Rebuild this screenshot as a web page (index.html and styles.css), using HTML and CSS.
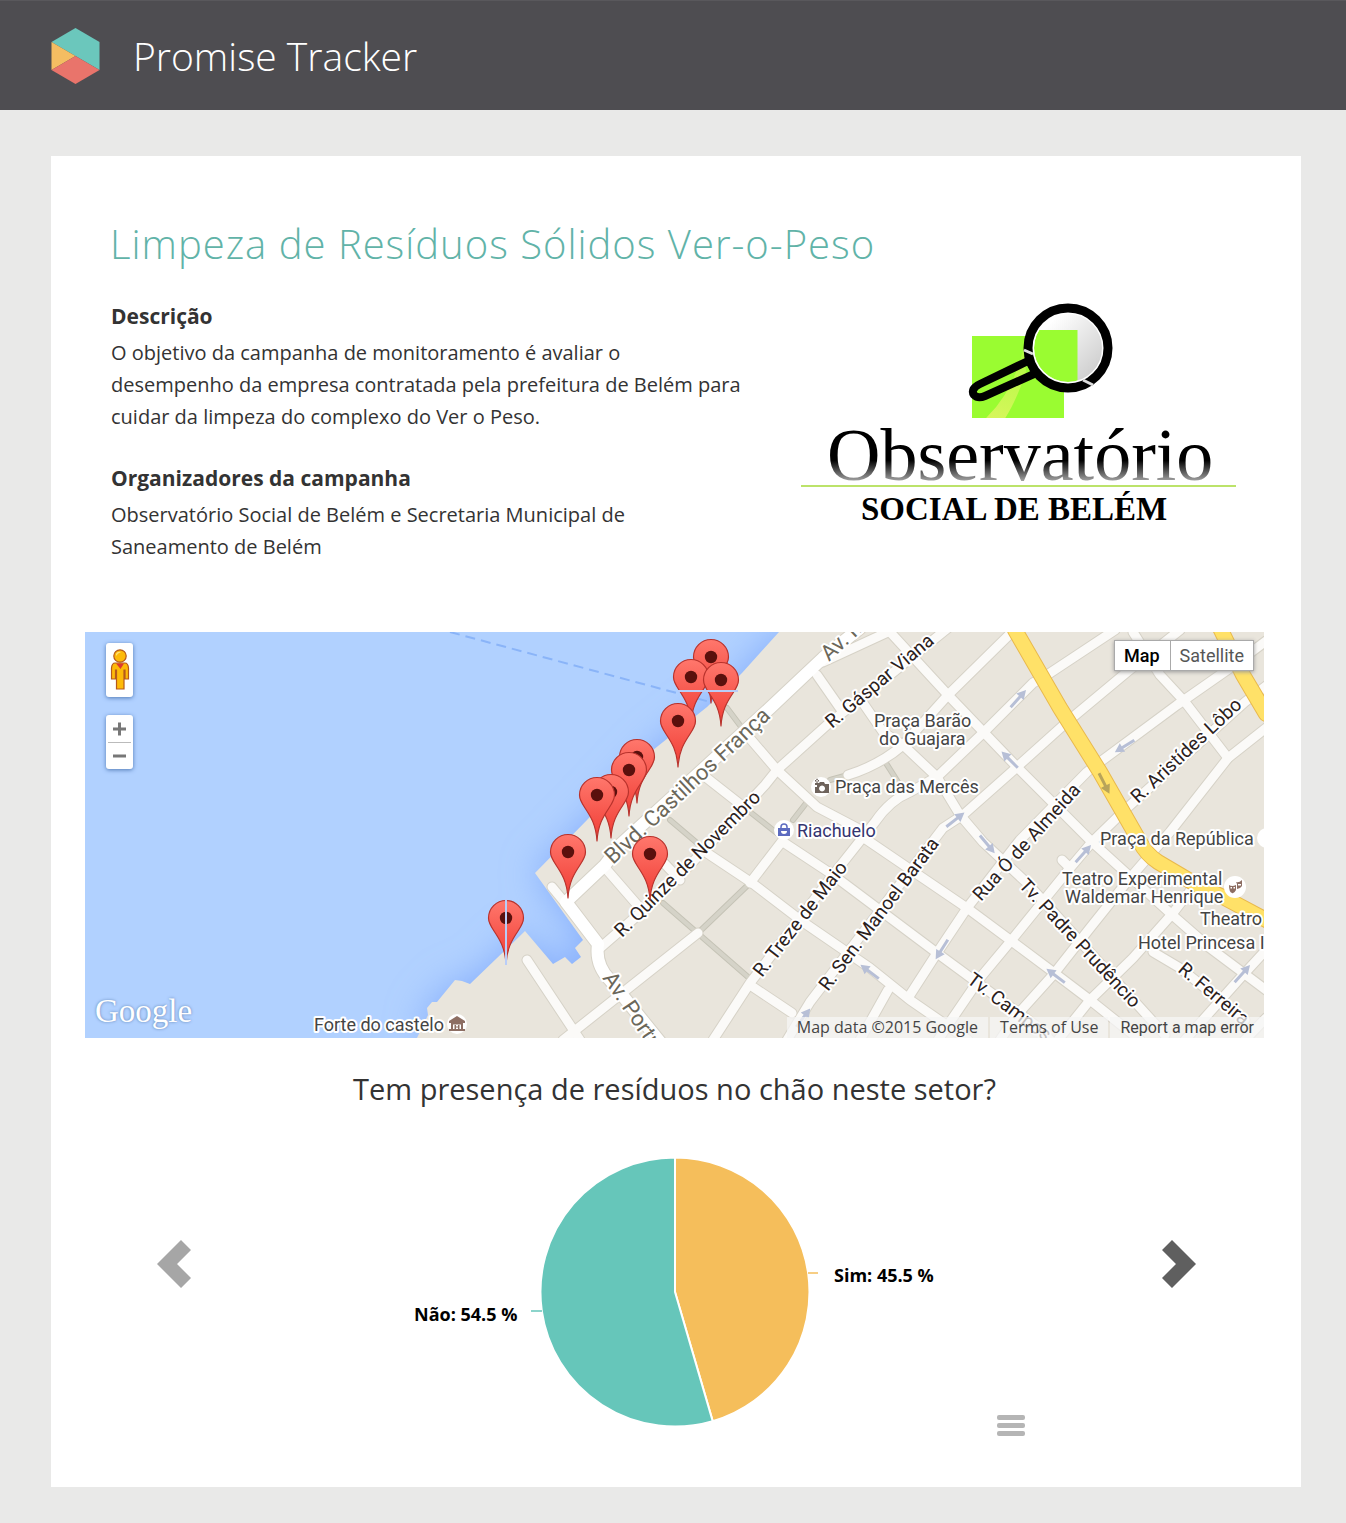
FILE: index.html
```html
<!DOCTYPE html>
<html lang="pt-BR">
<head>
<meta charset="utf-8">
<title>Promise Tracker</title>
<link rel="stylesheet" href="styles.css">
</head>
<body>
<header class="site-header">
  <a class="brand" href="#">
    <svg class="brand-mark" viewBox="0 0 48 56" aria-hidden="true">
      <path fill="#6bc7bc" d="M0 14 24 0 48 14V42z"/>
      <path fill="#f4bd62" d="M0 14 24 28 0 42z"/>
      <path fill="#e9746b" d="M24 28 48 42 24 56 0 42z"/>
    </svg>
    <span>Promise Tracker</span>
  </a>
</header>
<main class="card">
  <h1 class="campaign-title">Limpeza de Resíduos Sólidos Ver-o-Peso</h1>
  <section class="intro">
    <div class="intro-text">
      <h2>Descrição</h2>
      <p>O objetivo da campanha de monitoramento é avaliar o desempenho da empresa contratada pela prefeitura de Belém para cuidar da limpeza do complexo do Ver o Peso.</p>
      <h2>Organizadores da campanha</h2>
      <p>Observatório Social de Belém e Secretaria Municipal de Saneamento de Belém</p>
    </div>
    <svg class="org-logo" viewBox="800 300 436 230" role="img" aria-label="Observatório Social de Belém">
      <defs>
        <linearGradient id="fade" gradientUnits="userSpaceOnUse" x1="0" y1="425" x2="0" y2="482"><stop offset="0.62" stop-color="#000"/><stop offset="1" stop-color="#aaa"/></linearGradient>
        <linearGradient id="glass" x1="0" y1="0" x2="1" y2="1"><stop offset="0.2" stop-color="#fff"/><stop offset="1" stop-color="#c4c4c4"/></linearGradient>
        <linearGradient id="shine" gradientUnits="userSpaceOnUse" x1="1000" y1="418" x2="1024" y2="350"><stop offset="0" stop-color="#e4f565"/><stop offset="1" stop-color="#b4fa45"/></linearGradient>
        <clipPath id="lens"><circle cx="1068" cy="348" r="34"/></clipPath>
        <clipPath id="tile"><path d="M972 336h92v82h-92z"/></clipPath>
      </defs>
      <path fill="#9afc31" d="M972 336h92v82h-92z"/>
      <path clip-path="url(#tile)" fill="url(#shine)" d="M984 420Q1014 392 1024 346L1026 372Q1016 402 1004 420z" opacity=".8"/>
      <circle cx="1068" cy="348" r="36" fill="url(#glass)"/>
      <path clip-path="url(#lens)" fill="#9afc31" d="M1030 330h47.500v60h-47.500z"/>
      <circle cx="1068" cy="348" r="35" fill="none" stroke="#fff" stroke-width="2"/>
      <circle cx="1068" cy="348" r="40" fill="none" stroke="#000" stroke-width="9"/>
      <path fill="none" stroke="#000" stroke-width="8" d="M1028 361 980 384Q970 389 974 395 978 399 985 396L1034 374"/>
      <path fill="none" stroke="#000" stroke-width="5" d="M1026 358 1036 375"/>
      <path stroke="#ddd" stroke-width="3" d="M1024 350 1033 354M1083 380 1093 385"/>
      <text class="logo-name" x="827" y="480" fill="url(#fade)">Observatório</text>
      <path stroke="#bce36a" stroke-width="2" d="M801 486H1236"/>
      <text class="logo-sub" x="861" y="520">SOCIAL DE BELÉM</text>
    </svg>
  </section>

  <section class="map" aria-label="Mapa">
    <svg class="map-canvas" viewBox="85 632 1179 406" preserveAspectRatio="xMidYMid slice">
      <defs>
        <linearGradient id="pinfill" x1="0" y1="0" x2="0" y2="1"><stop offset="0" stop-color="#ff776c"/><stop offset="1" stop-color="#f03c34"/></linearGradient>
        <g id="pin">
          <path fill="url(#pinfill)" stroke="#b8322c" stroke-width="1.200" d="M0 46C-1 30-6 22-12 13-16 7-17.500 4-17.500 0A17.500 17.500 0 0 1 17.500 0C17.500 4 16 7 12 13 6 22 1 30 0 46z"/>
          <circle r="6.200" fill="#5a100d"/>
        </g>
        <g id="arrow"><path d="M-11-1.500H3V-5L12 0 3 5V1.500H-11z"/></g>
        <filter id="soft" x="-20%" y="-20%" width="140%" height="140%"><feGaussianBlur stdDeviation="18"/></filter>
        <path id="land" d="M779 632 742 673 707 707 653 750 587 820 535 873 583 940 575 948 581 957 572 964 565 957 553 964 525 931 470 984 462 981 455 980 437 1002 432 1002 427 1008 428 1015 417 1038H1264V632z"/>
        <clipPath id="frame"><path d="M85 632h1179v406H85z"/></clipPath>
        <g id="streets">
          <path d="M552 887 566 904"/>
          <path d="M823 662 888 632M600 948 646 908 690 865 765 785 777 770 827 725 880 683 948 628"/>
          <path d="M563 1040 698 933M750 883 783 840M848 775Q880 765 903 745L948 695 1012 632"/>
          <path d="M713 1040 750 983 833 875 875 822Q890 800 910 792L937 777 983 733 1033 683 1047 675 1115 630"/>
          <path d="M787 1040 810 1002 943 828 963 815 1017 767 1067 722 1127 672 1180 630"/>
          <path d="M908 998 937 953 967 908 1020 840 1087 772 1100 762 1177 705 1230 668 1266 641M888 990 860 1040"/>
          <path d="M1266 686 1245 702 1127 808 1092 842 1070 868 1010 942 980 978 950 1022 938 1040M1062 860 1070 868"/>
          <path d="M1266 728 1228 758 1170 832 1130 878 1090 928 1053 975 1017 1015 1000 1040"/>
          <path d="M1200 878 1173 913 1133 958 1090 1000 1058 1040M1266 950 1243 975 1185 1040M1266 1018 1240 1045"/>
          <path d="M527 960 580 1040M607 870 640 908M663 862 680 880M753 987 792 1013M703 775 745 808"/>
          <path d="M707 853 752 883 803 922 870 968 910 1000 968 1040M783 842 833 875 937 953 1035 1025 1050 1040"/>
          <path d="M747 735 777 770 817 807 857 828 867 840 967 908 1053 972 1090 1000 1140 1040"/>
          <path d="M817 675 840 708M863 703 883 732 903 745 937 777 960 815 983 842 1027 883 1165 1035"/>
          <path d="M890 632 948 695 1017 767 1092 842 1170 913 1210 948 1266 990"/>
          <path d="M1133 632 1160 675 1185 702 1228 758M1153 952 1180 968 1245 1020"/>
        </g>
        <path id="avenue" d="M568 900 605 865 620 845 770 708 823 658 860 628M566 902 598 944Q595 965 610 980L660 1042"/>
        <path id="highway" d="M1015 630 1060 708 1100 772 1140 842Q1146 854 1158 862L1197 885 1223 897 1268 921M1220 628 1243 675 1266 714"/>
      </defs>
      <g clip-path="url(#frame)">
        <path fill="#b1d1ff" d="M85 632h1179v406H85z"/>
        <use href="#land" class="shore" filter="url(#soft)"/>
        <path class="ferry" d="M450 632 710 702"/>
        <use href="#land" fill="#e9e5dc"/>
        <path class="lane-edge" d="M698 933 748 885M663 903 748 977M670 820 703 848M745 808 783 838M727 708 742 728M793 820 807 802M830 780 848 775M884 760 898 782"/>
        <path class="lane" d="M698 933 748 885M663 903 748 977M670 820 703 848M745 808 783 838M727 708 742 728M793 820 807 802M830 780 848 775M884 760 898 782"/>
        <use href="#streets" class="street-edge"/><use href="#avenue" class="avenue-edge"/>
        <use href="#streets" class="street"/><use href="#avenue" class="avenue"/>
        <use href="#highway" class="highway-edge"/><use href="#highway" class="highway"/>
        <g fill="#b7bfd6">
          <use href="#arrow" transform="translate(1018 699) rotate(-48)"/>
          <use href="#arrow" transform="translate(1010 760) rotate(-135)"/>
          <use href="#arrow" transform="translate(1125 746) rotate(148)"/>
          <use href="#arrow" transform="translate(955 820) rotate(-38)"/>
          <use href="#arrow" transform="translate(987 844) rotate(50)"/>
          <use href="#arrow" transform="translate(942 949) rotate(122)"/>
          <use href="#arrow" transform="translate(870 972) rotate(-143)"/>
          <use href="#arrow" transform="translate(803 1018) rotate(-53)"/>
          <use href="#arrow" transform="translate(1083 854) rotate(-48)"/>
          <use href="#arrow" transform="translate(1056 976) rotate(-143)"/>
          <use href="#arrow" transform="translate(1242 974) rotate(-48)"/>
        </g>
        <use href="#arrow" fill="#b8a45a" transform="translate(1104 783) rotate(63)"/>
        <g class="label road-main">
          <text transform="translate(613 865) rotate(-43)">Blvd. Castilhos França</text>
          <text transform="translate(829 662) rotate(-43)">Av. Marechal</text>
          <text transform="translate(602 978) rotate(56)">Av. Portugal</text>
        </g>
        <g class="label road">
          <text transform="translate(622 938) rotate(-45)">R. Quinze de Novembro</text>
          <text transform="translate(832 729) rotate(-40)">R. Gáspar Viana</text>
          <text transform="translate(762 978) rotate(-52)">R. Treze de Maio</text>
          <text transform="translate(828 992) rotate(-53)">R. Sen. Manoel Barata</text>
          <text transform="translate(981 902) rotate(-48)">Rua Ó de Almeida</text>
          <text transform="translate(1138 804) rotate(-43)">R. Aristídes Lôbo</text>
          <text transform="translate(1018 886) rotate(47)">Tv. Padre Prudêncio</text>
          <text transform="translate(966 982) rotate(37)">Tv. Campos</text>
          <text transform="translate(1177 971) rotate(40)">R. Ferreira</text>
        </g>
        <g class="label place">
          <text x="314" y="1031">Forte do castelo</text>
          <text x="874" y="727">Praça Barão</text>
          <text x="879" y="745">do Guajara</text>
          <text x="835" y="793">Praça das Mercês</text>
          <text x="797" y="837" fill="#34346f">Riachuelo</text>
          <text x="1100" y="845">Praça da República</text>
          <text x="1062" y="885">Teatro Experimental</text>
          <text x="1065" y="903">Waldemar Henrique</text>
          <text x="1200" y="925">Theatro</text>
          <text x="1138" y="949">Hotel Princesa I</text>
        </g>
        <g fill="#fff"><circle cx="457" cy="1024" r="10"/><circle cx="821" cy="787" r="10"/><circle cx="784" cy="830" r="10"/><circle cx="1235" cy="887" r="11"/><circle cx="1267" cy="838" r="10"/></g>
        <path fill="#8d6e63" fill-rule="evenodd" d="M457 1016 465 1021V1023H449V1021zM451 1023H463V1029H465V1031H449V1029H451zM453 1024.500V1029H461V1024.500zM454.500 1025H456V1026.500H458V1025H459.500V1029H458V1027.500H456V1029H454.500z"/>
        <path fill="#6e635c" fill-rule="evenodd" d="M815 783H819L820 782H824L825 784H829V793H815V787H817V785H815zM822 785.500a3 3 0 1 0 .1 0zM815 780h4v1.500h-4zM816.300 778.800h1.500v4h-1.500z"/>
        <path fill="#5c6bc0" d="M778 828H790V836H778z"/><path fill="none" stroke="#5c6bc0" stroke-width="1.500" d="M781 829V827A3 3 0 0 1 787 827V829"/><path fill="#fff" d="M781 831H787A3 3 0 0 1 781 831z"/>
        <path fill="#8d6e63" fill-rule="evenodd" d="M1229 885Q1232 887 1236 885V890Q1234 894 1232 893 1229 892 1229 885zM1230.500 887v1.500h1.500v-1.500zM1233.500 887v1.500h1.500v-1.500zM1236 882Q1239 883 1242 880V886Q1240 889 1237 889V884zM1238 884v1.500h3v-1.500z"/>
        <use href="#pin" x="711" y="657"/><use href="#pin" x="691" y="677"/><use href="#pin" x="721" y="680"/>
        <path fill="#b9cdf8" d="M678 690h60v2h-60z"/>
        <use href="#pin" x="678" y="721"/><use href="#pin" x="637" y="757"/><use href="#pin" x="629" y="770"/>
        <use href="#pin" x="611" y="792"/><use href="#pin" x="597" y="795"/><use href="#pin" x="568" y="852"/>
        <use href="#pin" x="650" y="854"/><use href="#pin" x="506" y="918"/>
        <path fill="#b9cdf8" d="M505 899h2v66h-2z"/>
      </g>
    </svg>
    <div class="map-nav">
      <button class="map-box pegman" type="button" aria-label="Street View">
        <svg viewBox="0 0 20 44" aria-hidden="true"><g fill="#fdba09" stroke="#b5591c" stroke-width="1.200"><path d="M5 15H15Q18 15 18.500 20V31H15V22H14V41H6.500V22H5.500V31H1.500V20Q2 15 5 15z"/><circle cx="10" cy="8" r="6.200"/></g><path fill="#db3a34" d="M6 15.500H14L10.500 21z"/><path fill="#ffe07a" d="M6 6a4 3 0 0 1 5-2Q8 5 6 8z"/></svg>
      </button>
      <div class="map-box zoom">
        <button type="button" aria-label="Zoom in"><svg viewBox="0 0 14 14" aria-hidden="true"><path d="M0 5.500H13V8.500H0zM5 0.500H8V13.500H5z"/></svg></button>
        <button type="button" aria-label="Zoom out"><svg viewBox="0 0 14 14" aria-hidden="true"><path d="M0 5.500H13V8.500H0z"/></svg></button>
      </div>
    </div>
    <div class="map-types"><button class="active" type="button">Map</button><button type="button">Satellite</button></div>
    <span class="google">Google</span>
    <div class="map-legal"><span>Map data ©2015 Google</span><a href="#">Terms of Use</a><a class="report" href="#">Report a map error</a></div>
  </section>

  <section class="survey">
    <h2 class="question">Tem presença de resíduos no chão neste setor?</h2>
    <div class="carousel">
      <button class="step prev" type="button" aria-label="Anterior"><svg viewBox="0 0 34 48" aria-hidden="true"><path d="M24 0 0 24 24 48 34 38 20 24 34 10z"/></svg></button>
      <div class="chart">
        <svg class="pie" viewBox="317 1108 720 340" role="img" aria-label="Sim 45.5 %, Não 54.5 %">
          <g stroke="#fff" stroke-width="2">
            <path fill="#f5be5b" d="M675 1292V1157.500A134.500 134.500 0 0 1 712.700 1421.100z"/>
            <path fill="#66c6ba" d="M675 1292 712.700 1421.100A134.500 134.500 0 1 1 675 1157.500z"/>
          </g>
          <path stroke="#f5be5b" stroke-width="1.500" d="M808 1273H818"/>
          <path stroke="#66c6ba" stroke-width="1.500" d="M531 1311H542"/>
          <text x="834" y="1282">Sim: 45.5 %</text>
          <text x="414" y="1321">Não: 54.5 %</text>
        </svg>
        <button class="menu" type="button" aria-label="Menu do gráfico"><i></i><i></i><i></i></button>
      </div>
      <button class="step next" type="button" aria-label="Próxima"><svg viewBox="0 0 34 48" aria-hidden="true"><path d="M10 0 34 24 10 48 0 38 14 24 0 10z"/></svg></button>
    </div>
  </section>
</main>
</body>
</html>
```
FILE: styles.css
```css
* { box-sizing: border-box; }
body {
  margin: 0;
  background: #e9e9e8;
  color: #333;
  font-family: "Open Sans", sans-serif;
  font-size: 20px;
  line-height: 32px;
}
h1, h2, p { margin: 0; }
button { padding: 0; border: 0; background: none; font: inherit; cursor: pointer; }
svg { display: block; }

.site-header {
  display: flex;
  align-items: center;
  height: 110px;
  padding: 0 51px;
  background: #4e4d51;
  border-top: 1px solid #59585c;
}
.brand {
  display: flex;
  align-items: center;
  gap: 33px;
  color: #fff;
  font-size: 39px;
  font-weight: 300;
  text-decoration: none;
}
.brand-mark { width: 49px; height: 56px; }

.card {
  margin: 46px 45px 36px 51px;
  padding: 64px 37px 39px 34px;
  background: #fff;
}
.campaign-title {
  padding-left: 25px;
  color: #61b3a8;
  font-size: 40px;
  font-weight: 300;
  line-height: 48px;
  letter-spacing: 1px;
}
.intro {
  display: grid;
  grid-template-columns: 1fr 436px;
  gap: 55px;
  margin: 32px 28px 69px 26px;
}
.intro-text h2 { margin-bottom: 5px; font-size: 21px; font-weight: 700; }
.intro-text p + h2 { margin-top: 29px; }
.org-logo { width: 100%; }
.logo-name { font: 74px "Liberation Serif", serif; }
.logo-sub { font: bold 33px "Liberation Serif", serif; }

.map {
  position: relative;
  height: 406px;
  overflow: hidden;
  font-family: Roboto, sans-serif;
}
.map-canvas { width: 100%; height: 100%; }
.map-canvas path, .map-canvas use { stroke-linejoin: round; }
.shore { fill: #86aefc; }
.ferry { fill: none; stroke: #8ab4f8; stroke-width: 2; stroke-dasharray: 10 6; }
.lane, .lane-edge, .street, .street-edge, .avenue, .avenue-edge, .highway, .highway-edge { fill: none; stroke-linecap: round; }
.lane { stroke: #d5d3c8; stroke-width: 4; }
.lane-edge { stroke: #c5c3b6; stroke-width: 6; }
.street { stroke: #fbfaf8; stroke-width: 9; }
.street-edge { stroke: #d6d2c7; stroke-width: 11; }
.avenue { stroke: #fff; stroke-width: 12; }
.avenue-edge { stroke: #d6d2c7; stroke-width: 14; }
.highway { stroke: #ffe168; stroke-width: 14; }
.highway-edge { stroke: #e9b94d; stroke-width: 16; }
.label { font-size: 18px; paint-order: stroke; stroke: #fff; stroke-width: 4; stroke-linejoin: round; }
.road { font-size: 19px; fill: #2b211c; }
.road-main { font-size: 22px; fill: #6b675a; }
.place { fill: #444; }

.map-nav { position: absolute; top: 11px; left: 21px; display: grid; gap: 18px; }
.map-box { width: 27px; height: 54px; border-radius: 3px; background: #fff; box-shadow: 0 1px 4px #5079b5; }
.pegman { display: grid; place-items: center; }
.pegman svg { width: 20px; height: 44px; }
.zoom { display: grid; grid-template-rows: 1fr 1fr; padding: 0 2px; }
.zoom button { display: grid; place-items: center; }
.zoom button + button { border-top: 1px solid #bbb; }
.zoom svg { width: 14px; height: 14px; fill: #777; }
.map-types {
  position: absolute;
  top: 8px;
  right: 10px;
  display: flex;
  height: 31px;
  border: 1px solid #aaa;
  background: #fff;
  box-shadow: 0 1px 4px #999;
}
.map-types button { padding: 0 9px; color: #565656; font-size: 18px; line-height: 29px; }
.map-types .active { padding: 0 10px 0 9px; border-right: 1px solid #aaa; color: #000; font-weight: 500; }
.google {
  position: absolute;
  left: 10px;
  bottom: 8px;
  color: #fff;
  font: 33px "Liberation Serif", serif;
  text-shadow: 0 0 3px #5a7dad;
}
.map-legal {
  position: absolute;
  right: 0;
  bottom: 0;
  display: flex;
  gap: 2px;
  color: #444;
  font: 16px/21px "Open Sans", sans-serif;
}
.map-legal > * {
  padding: 0 10px;
  background: rgba(245, 245, 245, .75);
  color: inherit;
  text-decoration: none;
}
.map-legal .report { font-family: Roboto, sans-serif; }

.question {
  margin-top: 31px;
  margin-bottom: -1px;
  font-size: 29px;
  font-weight: 400;
  line-height: 40px;
  text-align: center;
}
.carousel {
  display: flex;
  align-items: center;
  justify-content: space-between;
  padding: 0 68px 0 72px;
}
.step { padding-bottom: 28px; }
.step svg { width: 34px; height: 48px; }
.prev { fill: #a6a6a6; }
.next { fill: #5f5f5f; }
.chart { position: relative; width: 720px; }
.pie { width: 100%; }
.pie text { font-size: 18px; font-weight: 700; fill: #000; }
.menu { position: absolute; right: 12px; bottom: 12px; display: grid; gap: 3px; width: 28px; }
.menu i { height: 5px; border-radius: 2px; background: #b5b5b5; }
```
